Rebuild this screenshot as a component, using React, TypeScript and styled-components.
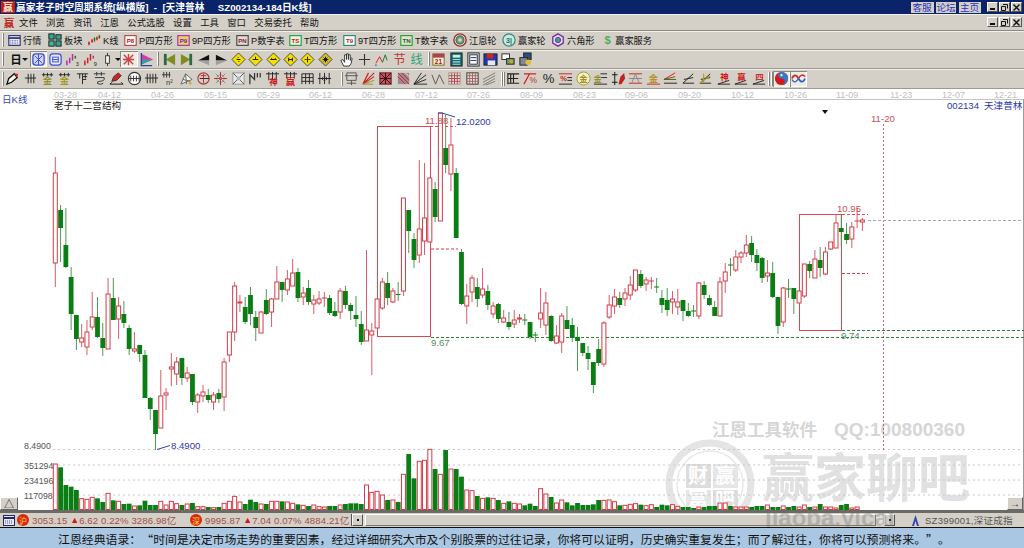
import React from 'react';
import styled, { createGlobalStyle } from 'styled-components';

const CJK = '"Liberation Sans", "Noto Sans CJK SC", sans-serif';
const GlobalStyle = createGlobalStyle`
  *, *::before, *::after { box-sizing: border-box; }
  html, body { margin: 0; padding: 0; overflow: hidden; background: #d4d0c8; }
  body { font-family: ${CJK}; }
`;
const Page = styled.div`width:1024px;height:548px;display:flex;flex-direction:column;background:#d4d0c8;overflow:hidden;`;
const TitleBar = styled.div`height:14px;flex:none;background:#0a246a;display:flex;align-items:center;color:#fff;font-size:9.7px;font-weight:700;white-space:pre;padding-left:1px;`;
const TitleText = styled.span`margin-left:1px;flex:1;`;
const LinkButton = styled.span`width:${p => p.$w}px;height:11px;margin-right:2.5px;background:#d4d0c8;color:#2a30c0;font-size:9.6px;font-weight:400;display:flex;align-items:center;justify-content:center;`;
const WinButtons = styled.div`display:flex;gap:1px;margin:0 2px 0 4px;`;
const WinButton = styled.span`width:11px;height:10px;background:#d4d0c8;border:1px solid;border-color:#fff #555 #555 #fff;display:flex;align-items:center;justify-content:center;`;
const MenuBar = styled.div`height:17px;flex:none;display:flex;align-items:center;border-bottom:1px solid #8b8982;box-shadow:inset 0 1px 0 #f2f0ea;font-size:9.4px;color:#111;padding-left:3px;`;
const MenuItem = styled.span`margin-right:8.3px;`;
const MenuSpace = styled.div`flex:1;`;
const ToolRow = styled.div`height:${p => p.$h}px;flex:none;display:flex;align-items:center;border-bottom:1px solid #9c9a92;box-shadow:inset 0 1px 0 #f2f0ea;font-size:9.2px;color:#111;`;
const Grip = styled.span`width:2px;height:14px;margin:0 ${p => p.$r ?? 0}px 0 ${p => p.$l ?? 2}px;border-left:1px solid #fff;border-right:1px solid #807e76;flex:none;`;
const LabelButton = styled.span`width:${p => p.$w}px;display:flex;align-items:center;gap:2px;flex:none;white-space:nowrap;`;
const IconButton = styled.span`width:${p => p.$w ?? 17.35}px;margin-left:${p => p.$ml ?? 0}px;height:16px;flex:none;display:flex;align-items:center;justify-content:center;${p => p.$on ? 'background:#eeece6;box-shadow:inset 1px 1px 0 #8b8982, inset -1px -1px 0 #fff;' : ''}`;
const DayPick = styled.span`width:18px;margin-left:3px;font-size:11.5px;font-weight:700;text-align:center;flex:none;`;
const Caret = styled.span`width:6px;height:3px;flex:none;margin:0 ${p => p.$r}px 0 ${p => p.$l}px;border-left:3px solid transparent;border-right:3px solid transparent;border-top:3px solid #111;`;
const ChartWrap = styled.div`height:421px;flex:none;background:#fff;position:relative;overflow:hidden;`;
const ChartSvg = styled.svg`display:block;`;
const CornerButton = styled.span`position:absolute;bottom:0;${p => p.$right ? 'right:1px;width:16px;' : 'left:0;width:18px;'}height:13px;background:#d4d0c8;border:1px solid;border-color:#fff #666 #666 #fff;display:flex;align-items:center;justify-content:center;font-size:10px;color:#222;`;
const StatusBar = styled.div`height:18px;flex:none;border-top:3px solid #6c6a64;border-bottom:1px solid #111;display:flex;align-items:center;position:relative;overflow:hidden;font-size:9.6px;color:#a0504a;`;
const IndexText = styled.span`margin-left:${p => p.$ml}px;white-space:pre;flex:none;display:flex;align-items:center;width:${p => p.$w}px;letter-spacing:.01em;`;
const Up = styled.span`color:#d01818;font-size:9px;`;
const Coin = styled.span`width:12px;height:12px;margin-left:${p => p.$ml}px;border-radius:50%;background:#d62a10;color:#ffd84a;font-size:8px;flex:none;display:flex;align-items:center;justify-content:center;`;
const ScrollBar = styled.div`width:544px;margin-left:4px;height:12px;display:flex;flex:none;background:#e4e1da;border-left:1px solid #555;`;
const ScrollBtn = styled.span`width:11px;height:12px;background:#d4d0c8;border:1px solid;border-color:#fff #555 #555 #fff;display:flex;align-items:center;justify-content:center;flex:none;&::after{content:'';width:2px;height:2px;background:#111;}`;
const ScrollThumb = styled.span`flex:1;background:#d4d0c8;border:1px solid;border-color:#fff #777 #777 #fff;margin-left:2px;margin-right:8px;`;
const MarketTag = styled.span`margin-left:17px;color:#555;display:flex;align-items:center;gap:6px;white-space:nowrap;letter-spacing:.02em;`;
const FadedUrl = styled.span`position:absolute;left:765px;top:-9px;font-size:24px;font-weight:700;color:#7a7a7a;opacity:.38;white-space:nowrap;pointer-events:none;`;
const QuoteBar = styled.div`flex:1;background:#a9c7e3;display:flex;align-items:center;padding-left:58px;font-family:"Noto Sans CJK SC",sans-serif;font-size:11.9px;text-spacing-trim:space-all;color:#111;white-space:nowrap;`;

const K='#222',R='#d02020',O='#90902a',G='#0a7d14',B='#3040c0',T='#208878',M='#b030a0';
const s=(c:string,d:string,f='none',w=1)=><path key={c+d+f} d={d} stroke={c} fill={f} strokeWidth={w}/>;
const tx=(t:string,x:number,y:number,c:string,z=7,b=700)=><text key={t+x} x={x} y={y} fill={c} fontSize={z} fontWeight={b} fontFamily={CJK} textAnchor="middle">{t}</text>;
const Icon=({size=15,children}:{size?:number;children:React.ReactNode})=><svg width={size} height={size} viewBox="0 0 16 16">{children}</svg>;
const boxIcon=(t:string,b:string,bg:string,c:string)=><Icon size={13}><rect x="1" y="2" width="14" height="12" fill={bg} stroke={b} strokeWidth="1.4"/>{tx(t,8,11,c,7.5)}</Icon>;

const row1=[
 {w:40,l:'行情',i:<Icon size={13}><rect x="1" y="2" width="14" height="12" fill="#e8e8f4" stroke="#202870" strokeWidth="1.3"/><path d="M1 5H15" stroke="#202870" strokeWidth="2"/><path d="M3 8H13M3 10H13M3 12H13" stroke="#505898" strokeDasharray="1 1"/></Icon>},
 {w:40,l:'板块',i:<Icon size={14}><rect x="1" y="1" width="6" height="6" fill="#30a890" stroke="#111"/><rect x="9" y="2" width="6" height="5" fill="#30a890" stroke="#111"/><rect x="1" y="9" width="6" height="6" fill="#40b8a0" stroke="#111"/><rect x="9" y="9" width="6" height="6" fill="#30a890" stroke="#111"/></Icon>},
 {w:36,l:'K线',i:<Icon size={13}>{s(R,'M1 14V9M5 11V6')}{s(G,'M8 10V4')}{s(R,'M11 8V3M14 6V1')}<rect x="0.5" y="10" width="2" height="3" fill={R}/><rect x="4" y="7" width="2" height="3" fill={R}/><rect x="7" y="5" width="2" height="3" fill={G}/><rect x="10" y="4" width="2" height="3" fill={R}/><rect x="13" y="2" width="2" height="3" fill={G}/></Icon>},
 {w:53,l:'P四方形',i:boxIcon('P8','#c04040','#fff','#a02020')},
 {w:59,l:'9P四方形',i:boxIcon('P9',M,'#e8d070','#7020a0')},
 {w:53,l:'P数字表',i:boxIcon('PN','#444','#ddd','#a01818')},
 {w:54,l:'T四方形',i:boxIcon('TS','#20a040','#f0f0e0','#c02020')},
 {w:57,l:'9T四方形',i:boxIcon('T9',T,'#fff','#c02020')},
 {w:53,l:'T数字表',i:boxIcon('TN','#20a040','#e8e4c0','#106060')},
 {w:49,l:'江恩轮',i:<Icon size={14}><circle cx="8" cy="8" r="7" fill="#fff" stroke="#a02828" strokeWidth="1.6"/><circle cx="8" cy="8" r="4.6" fill="#889080" stroke="#208040" strokeWidth="1.4"/><circle cx="8" cy="8" r="2" fill="#d8d8c8"/></Icon>},
 {w:49,l:'赢家轮',i:<Icon size={14}><circle cx="8" cy="8" r="7" fill="#c8e8e0" stroke="#308878" strokeWidth="1.4"/>{tx('3|',8,11,'#207060',8)}</Icon>},
 {w:51,l:'六角形',i:<Icon size={14}><path d="M8 1L14 4.5V11.5L8 15L2 11.5V4.5Z" fill="#e8d8f0" stroke="#7030a8" strokeWidth="1.5"/><circle cx="8" cy="8" r="3" fill="#509880" stroke="#4040c0"/></Icon>},
 {w:50,l:'赢家服务',i:<Icon size={14}>{tx('$',8,13.5,'#50b050',16)}</Icon>},
];

const dia=(d:string)=><Icon size={15}><path d="M8 1L15 8L8 15L1 8Z" fill="#f4e000" stroke="#444"/>{s('#111',d)}</Icon>;
const row2a=[
 {on:true,i:<Icon><rect x="2" y="2" width="12" height="12" rx="3" fill="#d0d8f8" stroke="#4050c8" strokeWidth="1.4"/>{s('#4050c8','M4 4L12 12M12 4L4 12M8 2V14')}</Icon>},
 {i:<Icon><rect x="2" y="2" width="12" height="12" rx="3" fill="#e4e8fc" stroke="#4050c8" strokeWidth="1.3"/>{s('#4050c8','M5 5.5H11M5 8H11M5 10.5H11M5 5V11M11 5V11')}</Icon>},
 {i:<Icon>{s(M,'M2 14V9M5 12V6M8 9V2','none',1.6)}{s(G,'M11 7V4','none',1.6)}{tx('3',13,15,K,6,400)}</Icon>},
 {i:<Icon>{s(R,'M2 14V9M5 12V6M8 9V2','none',1.6)}{s(M,'M11 7V4','none',1.6)}{tx('9',13,15,K,6,400)}</Icon>},
 {i:<Icon><rect x="6" y="4" width="4" height="8" fill="#f8f8e8" stroke="#333"/>{s('#333','M8 1V4M8 12V15')}</Icon>},
];
const row2b=[
 {on:true,i:<Icon><rect x="3" y="3" width="10" height="10" fill="#f4d8d8"/>{s('#c04848','M3 3L13 13M13 3L3 13M8 2V14M2 8H14','none',1.4)}</Icon>},
 {i:<Icon><path d="M3 2L15 8L3 13Z" fill="#e830b0"/><path d="M3 8L15 8L3 13Z" fill="#20a898"/>{s('#3040a0','M2.5 1V15M2 14.5H14','none',1.4)}</Icon>},
];
const row2c=[
 {i:<Icon><path d="M14 2L4 8L14 14Z" fill="#808c20"/><rect x="2" y="2" width="3" height="12" fill="#2a6a40"/></Icon>},
 {i:<Icon><path d="M2 2L12 8L2 14Z" fill="#808c20"/><rect x="11" y="2" width="3" height="12" fill="#2a6a40"/></Icon>},
 {i:<Icon><path d="M14 3L2 9L14 9Z" fill="#111"/><path d="M14 9L2 9L14 14Z" fill="#a0a0a0"/></Icon>},
 {i:<Icon><path d="M2 3L14 9L2 9Z" fill="#111"/><path d="M2 9L14 9L2 14Z" fill="#a0a0a0"/></Icon>},
 {i:dia('M6 8H10M7 6.5L8 5.5M8 10.5L9 9.5')},
 {i:dia('M5 8H11M8 5V8')},
 {i:dia('M5 8H11M5 8L6.5 6.5M11 8L9.5 6.5')},
 {i:dia('M6 6V10M10 6V10M6 8H10')},
 {i:dia('M8 5V11M5 8H7M9 8H11')},
 {i:<Icon size={15}><path d="M8 1L15 8L8 15L1 8Z" fill="#d8c020" stroke="#444"/>{s('#111','M5 8H11M8 5V11M6 6L10 10M10 6L6 10')}</Icon>},
];
const row2d=[
 {ml:3.5,i:<Icon>{s('#333','M5 15L2 9L4 8L6 11V3L8 3V8L8 2L10 2V8L10 3L12 3V9L13 6L14 7L13 12L11 15Z','#fff')}</Icon>},
 {ml:1,i:<Icon>{s('#333','M8 2V14M2 8H14','none',1.2)}</Icon>},
 {i:<Icon>{s(R,'M2 12L6 5L9 11')}{s(G,'M9 11L12 3L14 9')}{s(B,'M1 14H3')}</Icon>},
 {i:<Icon>{tx('节',8,13,'#c83030',13,400)}</Icon>},
 {i:<Icon>{tx('线',8,13,'#30a080',13,400)}</Icon>},
];
const row2e=[
 {i:<Icon><rect x="2" y="2" width="12" height="12" fill="#f8f0d0" stroke="#806020"/><rect x="2" y="2" width="12" height="4" fill="#b04050"/>{tx('21',8,13,'#a01818',7)}</Icon>},
 {i:<Icon><rect x="2" y="1" width="12" height="14" fill="#106878" stroke="#222"/><rect x="4" y="3" width="8" height="3" fill="#c8f0e0"/>{s('#b8d8c8','M4 8H12M4 10.5H12M4 13H12','none',1.2)}</Icon>},
 {i:<Icon><rect x="2" y="1" width="12" height="14" fill="#e8e8e8" stroke="#222"/><rect x="4" y="3" width="8" height="10" fill="#fff" stroke="#202848"/>{s('#202848','M5 6H11M5 9H11')}</Icon>},
 {i:<Icon><rect x="1" y="2" width="14" height="12" fill="#1838c0" stroke="#222"/><rect x="4" y="2" width="7" height="5" fill="#d02818"/><rect x="5" y="9" width="8" height="5" fill="#e8e8e8"/></Icon>},
 {i:<Icon><rect x="1" y="2" width="8" height="6" fill="#fff" stroke="#223"/><rect x="6" y="7" width="8" height="6" fill="#68a060" stroke="#223"/><circle cx="11" cy="10" r="2" fill="#d8a020"/></Icon>},
 {i:<Icon><rect x="6" y="1" width="8" height="7" fill="#305070" stroke="#223"/><rect x="2" y="6" width="8" height="8" fill="#808890" stroke="#223"/><circle cx="11" cy="11" r="3" fill="#e0c030"/></Icon>},
];

const tri='M2 7.5H14M5.5 3V13M8.5 3V13M11.5 3V13';
const ang='M2 13H14M2 13L13 3M3 9L13 7';
const gold=(c:string)=>tx('金',8,13.5,c,10,700);
const row3a=[
 <Icon><path d="M2 14L4 8L10 3L13 7L7 12Z" fill="#f4f4f0" stroke="#111" strokeWidth="1.4"/><path d="M10 3L13 7L14 3Z" fill="#d02020"/></Icon>,
 <Icon>{s(K,tri)}</Icon>,
 <Icon>{s(K,'M2 4H14M4 2V6M8 2V6M12 2V6')}{gold(O)}</Icon>,
 <Icon>{s(K,'M2 4H14M4 2V6M8 2V6M12 2V6')}{gold('#a09828')}</Icon>,
 <Icon>{s(K,'M2 3H14M5 3V8M8 3V14M11 3V8M8 6H13M8 9H12')}</Icon>,
 <Icon>{s('#333','M2 3H14M5 1V5M10 1V5M3 7H13Q14 11 8 11Q5 11 6 13.5Q10 15 12 13')}</Icon>,
 <Icon><path d="M3 11L5 6L10 2L13 5L8 10Z" fill="#d02020" stroke="#333"/>{s('#111','M1 14H15M1 14L3 12M15 14L13 12')}</Icon>,
 <Icon><circle cx="8" cy="8" r="6.5" fill="#fff" stroke="#333" strokeWidth="1.2"/>{s('#333','M1 8H15M4 5V11M7 5V11M10 5V11M13 5V11')}</Icon>,
 <Icon>{s(K,'M1 7.5H15M3.5 3V13M6.5 3V13M9.5 3V13M12.5 3V13')}</Icon>,
 <Icon>{s('#333','M1 4H10M3 1V7M6 1V7M9 1V7')}{tx('n²',9,15,'#333',8,400)}</Icon>,
 <Icon>{s('#666','M2 14L7 3L14 9ZM7 3L8 14M4 9L12 11','#f4f2ee')}<circle cx="12" cy="13" r="1.5" fill="#d0b020"/></Icon>,
 <Icon><circle cx="8" cy="8" r="6" fill="none" stroke="#a04040" strokeWidth="1.2"/>{s(K,'M4 8H14')}{s(R,'M8 3V13M5 5H11')}</Icon>,
 <Icon><circle cx="8" cy="8" r="4" fill="#e8e0e0" stroke="#999"/>{s(R,'M1 8H15M8 1V15')}{s('#888','M3 3L13 13M13 3L3 13')}</Icon>,
 <Icon><rect x="2" y="2" width="12" height="12" fill="#e8e8e8" stroke="#999"/>{s('#555','M2 2L14 14M14 2L2 14')}<rect x="6" y="6" width="4" height="4" fill="#b0b8b8"/></Icon>,
 <Icon>{s('#333','M2 14V4L7 9V2M10 2V7M13 2V7','none',1.3)}</Icon>,
 <Icon>{s(K,'M1 3H15M4 1V10M8 1V10M12 1V10')}{tx('神',9,15,'#d01818',9,700)}</Icon>,
 <Icon>{s(K,'M1 3H15M4 1V8M8 1V8M12 1V8')}{tx('赢',8,15,'#d01818',10,700)}</Icon>,
 <Icon>{s(K,'M2 3H14M2 3V14M14 3V14M2 7H14M2 11H14M6 3V14M10 3V14')}</Icon>,
 <Icon>{s(K,'M3 2V14M13 2V14M8 2V14M1 8H15M5 8L7 6M5 8L7 10M11 8L9 6M11 8L9 10')}</Icon>,
];
const gridI=(a:string,b:string)=><Icon><rect x="2" y="2" width="12" height="12" fill="#e8e0dc" stroke={a}/>{s(b,'M2 5H14M2 8H14M2 11H14M5 2V14M8 2V14M11 2V14')}</Icon>;
const row3b=[
 <Icon>{s('#555','M1 5H15M3 2H13V10H3ZM8 10V15M3 13H13')}</Icon>,
 <Icon>{s(R,'M2 14L14 2M2 14L14 6M2 14L8 2','none',1.2)}{s(O,'M2 14L14 10M2 14H13')}</Icon>,
 <Icon><rect x="2" y="2" width="12" height="12" fill="#c85060" stroke="#501818"/>{s('#301010','M2 2L14 14M14 2L2 14M8 2V14M2 8H14')}</Icon>,
 <Icon><rect x="2" y="2" width="12" height="12" fill="#a08890"/>{s('#d02020','M2 2L14 14M6 2L14 10M2 6L10 14')}{s('#eee','M10 2L14 6')}</Icon>,
 <Icon>{s('#222','M1 14H15M1 14L14 4M1 14L14 9M1 14L9 2')}</Icon>,
 <Icon>{s('#555','M2 4L6 14L10 4M10 4L15 14')}</Icon>,
 gridI('#a09090','#b04848'),
 gridI('#333','#a06060'),
 <Icon>{s('#777','M1 9L14 2M1 12L14 5M1 15L14 8M4 15L14 11')}</Icon>,
];
const row3c=[
 <Icon>{s(K,'M2 3H14M2 8H13M2 13H14M2 2V14M8 3V13M5 3V13','none',1.2)}</Icon>,
 <Icon>{s(R,'M1 3H14M1 14L7 3','none',1.3)}{tx('%',11,13,'#c03030',9,400)}</Icon>,
 <Icon>{tx('%',8,13,'#222',14,400)}</Icon>,
 <Icon>{s(R,'M1 3H15')}{tx('%',6,11,R,8,700)}{s('#222','M10 7H15M10 10H15M1 14H15')}</Icon>,
 <Icon><circle cx="8" cy="8" r="7" fill="#f4f0c8" stroke="#a09830"/>{tx('金',8,12,'#a09020',9,700)}</Icon>,
 <Icon>{s(K,'M8 3H15M8 7H15M1 14H15')}{tx('金',5,12,O,9,700)}</Icon>,
 <Icon>{s('#111','M4 1V15M1 4H7M1 12H7')}<path d="M8 14L10 6L14 2L15 8L11 14Z" fill="#c82020"/></Icon>,
 <Icon>{s(R,'M1 3H15M1 13H15')}{s('#888','M1 8H15M4 13L8 3L12 13')}</Icon>,
 <Icon>{s(R,'M1 14H15')}{tx('金',8,12,'#b89020',10,700)}</Icon>,
 <Icon>{s(R,'M1 9L13 2M1 9L13 6')}{s(G,'M1 9H14')}{s(K,'M1 13H15')}</Icon>,
 <Icon>{s(K,ang)}</Icon>,
 <Icon>{s(K,ang)}{s('#b0a020','M2 13L13 5M6 3V12','none',1.3)}</Icon>,
 <Icon>{s(K,'M2 14H15M2 14L14 10')}{tx('神',9,10,'#d01818',9,700)}</Icon>,
 <Icon>{s(K,'M2 14H15M2 14L14 10')}{tx('赢',9,10,'#d01818',9,700)}</Icon>,
 <Icon>{s(K,'M2 14H15M2 14L14 10')}{tx('四',9,10,'#c83030',9,700)}</Icon>,
];

// [wickTop, wickBottom, bodyTop, bodyBottom, rising]
const C:number[][]=[
[157,287,173,263,1],[205,262,210,228,0],[208,268,245,267,0],[267,330,277,314,0],[315,350,315,339,0],[324,347,338,342,1],[320,355,332,347,1],[292,330,317,327,1],[297,338,317,337,0],[323,356,338,348,0],[278,349,294,349,1],[278,320,298,320,0],[297,339,306,319,1],[301,328,314,323,0],[325,355,328,349,0],[332,353,349,351,1],[345,362,345,354,0],[350,398,355,398,0],[397,420,398,409,0],[410,450,410,434,0],[370,428,396,428,1],[388,410,393,395,1],[353,386,367,369,1],[357,385,362,374,1],[358,385,358,378,0],[367,382,373,378,1],[374,405,374,402,0],[393,413,395,402,1],[385,402,392,396,1],[389,403,395,400,0],[392,410,395,402,1],[389,403,393,399,0],[358,411,362,397,1],[332,362,332,355,1],[282,341,286,332,1],[295,312,302,303,1],[297,324,307,322,0],[287,325,295,314,0],[311,341,317,328,0],[311,333,312,333,1],[289,315,300,314,0],[298,327,299,312,1],[266,299,282,299,1],
[282,302,282,290,0],[270,295,279,290,1],[259,286,273,286,1],[268,302,272,298,0],[287,305,293,297,1],[280,305,288,302,0],[295,314,300,304,1],[291,305,299,303,1],[292,307,298,298,1],[295,315,298,313,0],[302,317,311,316,0],[288,319,291,312,1],[286,309,291,305,0],[303,320,305,311,0],[296,327,315,319,0],[311,345,324,342,0],[250,341,330,341,1],[323,375,331,335,1],[298,328,299,328,1],[278,310,282,308,1],[272,305,283,298,0],[288,303,291,302,1],[282,301,294,295,0],[198,296,198,291,1],[210,253,210,231,0],[233,268,239,260,0],[160,263,229,255,1],[163,255,218,241,1],[178,242,178,242,1],[182,222,189,217,0],[113,221,113,221,1],[115,173,148,165,0],[118,191,145,174,1],[168,238,173,238,0],[249,305,252,304,0],[284,324,296,306,1],[275,302,278,292,1],[278,307,287,299,0],[268,298,289,295,1],[285,310,291,305,0],[302,318,306,314,1],[303,323,304,319,0],[310,323,318,322,1],[312,330,322,327,0],[310,328,320,324,1],[314,323,318,319,1],
[314,325,320,320,0],[322,339,322,337,0],[332,342,335,335,0],[288,328,313,319,1],[292,335,303,325,1],[315,342,316,341,0],[325,344,336,343,1],[313,353,316,342,1],[306,329,320,329,0],[318,342,325,338,0],[327,371,337,341,0],[343,356,343,353,0],[346,370,353,359,0],[362,393,362,385,0],[339,366,349,363,0],[321,367,323,364,1],[295,319,305,317,1],[289,314,297,306,1],[292,308,298,305,0],[288,306,293,299,1],[276,300,285,295,1],[270,292,270,290,1],[270,288,274,286,0],[277,291,280,284,1],[277,289,281,281,1],[278,293,287,287,0],[290,313,298,305,0],[288,316,300,310,0],[291,314,299,302,1],[289,315,302,307,1],[300,321,300,311,0],[303,317,311,316,0],[305,317,311,311,0],[282,319,283,316,1],[281,299,285,295,0],[295,306,298,305,0],[301,316,307,316,0],[277,316,282,316,1],[263,293,272,281,1],[258,276,265,265,0],[250,272,257,270,1],[251,263,253,257,1],[235,257,245,253,1],[236,262,243,255,0],[249,271,255,263,0],[257,283,258,278,0],[260,282,273,276,1],
[262,298,273,297,0],[297,334,297,326,0],[287,327,288,322,1],[279,298,289,289,0],[288,314,288,299,0],[291,303,291,303,1],[264,298,264,296,1],[261,278,264,271,0],[250,278,259,278,1],[247,277,260,268,0],[247,275,252,274,1],[242,250,242,249,1],[215,248,223,248,1],[215,247,228,232,0],[223,244,234,240,0],[222,248,227,239,1],[208,228,221,221,1],[218,231,220,222,1],
];
const VZ=[102,112,165,170,180,206,208,202,205,216,190,211,214,222,221,228,226,212,225,225,214,225,214,221,225,222,219,230,230,231,233,231,220,214,199,216,222,209,216,222,222,214,214,214,216,220,223,226,228,225,230,231,228,228,
225,222,220,220,222,165,187,184,195,210,210,216,133,72,145,94,91,58,117,133,60,117,117,140,180,182,198,205,202,205,210,220,214,220,222,226,221,228,176,192,201,219,210,217,226,219,225,225,223,210,211,210,215,226,226,223,221,224,227,224,231,224,226,224,229,
231,231,234,231,231,228,228,219,219,228,231,231,231,231,228,228,225,231,231,228,231,228,231,225,231,231,222,231,231,234,225,222,234,231];
const px=(i:number)=>55.3+5.275*i;
const RED='#d23c48',GRN='#0a7d14';

const dates=['03-28','04-12','04-26','05-15','05-29','06-12','06-28','07-12','07-26','08-09','08-23','09-06','09-20','10-12','10-26','11-09','11-23','12-07','12-21'];
const dateX=[54,98,151,204,257,309,362,415,467,520,573,625,678,731,784,836,890,942,994];
const F=CJK;
const ChartText=({x,y,c,z=9.6,children}:any)=><text x={x} y={y} fill={c} fontSize={z} fontFamily={F}>{children}</text>;
const Dash=({x1,x2,y,c,d='3 2'}:any)=><line x1={x1} x2={x2} y1={y} y2={y} stroke={c} strokeDasharray={d}/>;

const Watermark=()=>(
 <g fill="#e1e1e1" fontFamily={F} fontWeight={700}>
  <text x="712" y="436" fontSize="17.5" fill="#d6d6d6">江恩工具软件</text>
  <text x="834" y="436" fontSize="19" fill="#d6d6d6">QQ:100800360</text>
  <text x="762" y="497" fontSize="52">赢家聊吧</text>
  <circle cx="710" cy="484" r="41" fill="none" stroke="#e4e4e4" strokeWidth="7"/>
  <circle cx="710" cy="484" r="33" fill="none" stroke="#e8e8e8" strokeWidth="1.5"/>
  <rect x="686" y="464" width="25" height="24" fill="#ddd"/><rect x="713" y="464" width="25" height="24" fill="#e6e6e6"/>
  <rect x="686" y="490" width="25" height="20" fill="#e6e6e6"/><rect x="713" y="490" width="25" height="20" fill="#ddd"/>
  <text x="688" y="483" fontSize="20" fill="#fff">财</text><text x="715" y="483" fontSize="20" fill="#fff">赢</text>
  <text x="688" y="507" fontSize="20" fill="#fff">富</text><text x="715" y="507" fontSize="20" fill="#fff">吧</text>
 </g>
);

const KChart=()=>(
 <ChartSvg width={1024} height={421} viewBox="0 89 1024 421">
  <Watermark/>
  <line x1="53" x2="1024" y1="99.5" y2="99.5" stroke="#c4c4c4"/>
  <line x1="1023.5" x2="1023.5" y1="99" y2="510" stroke="#9a9a9a"/>
  {dates.map((d,i)=><ChartText key={d} x={dateX[i]} y={98} c="#c0c0c0" z={9}>{d}</ChartText>)}
  <ChartText x={2} y={103} c="#3048c0">日K线</ChartText>
  <ChartText x={54} y={109} c="#222">老子十二宫结构</ChartText>
  <ChartText x={947} y={109} c="#2838b0">002134</ChartText>
  <ChartText x={984} y={109} c="#2838b0">天津普林</ChartText>
  <path d="M822 110H828L825 114Z" fill="#111"/>
  <ChartText x={871} y={122} c="#c85060">11-20</ChartText>
  {[449.5,465,480,495].map(y=><Dash key={y} x1={53} x2={1020} y={y} c="#c8c8c8" d="2 3"/>)}
  <line x1="883.5" x2="883.5" y1="124" y2="450" stroke="#d06070" strokeDasharray="2 2"/>
  <Dash x1={431} x2={1024} y={337.5} c="#30803c"/>
  <Dash x1={842} x2={1024} y={330.5} c="#30803c"/>
  <Dash x1={868} x2={1024} y={220.5} c="#a8a8a8"/>
  <Dash x1={430} x2={456} y={126.5} c="#d05058"/>
  <Dash x1={431} x2={458} y={249} c="#d03c48"/>
  <Dash x1={842} x2={868} y={214.5} c="#d05058"/>
  <Dash x1={842} x2={868} y={273.5} c="#d03c48"/>
  <rect x="377.5" y="126.5" width="53" height="210" fill="none" stroke="#d84850"/>
  <rect x="799.5" y="214.5" width="42" height="116" fill="none" stroke="#d84850"/>
  {C.map((c,i)=>{const x=px(i);const [wt,wb,bt,bb,up]=c;const h=Math.max(bb-bt,0);return (
   <g key={i}>
    <line x1={x} x2={x} y1={wt} y2={wb} stroke={up?'#d85c68':'#4f9a55'}/>
    {up?(h<1?<line x1={x-2.5} x2={x+2.5} y1={bt} y2={bt} stroke={RED}/>:<rect x={x-2} y={bt} width={4} height={h} fill="#fff" stroke={RED}/>)
       :(h<1?<line x1={x-2.5} x2={x+2.5} y1={bt} y2={bt} stroke={GRN}/>:<rect x={x-2.4} y={bt} width={4.8} height={h} fill={GRN}/>)}
   </g>);})}
  {VZ.map((v,i)=>{const x=px(i);const t=430+v/3;const up=C[i][4];return up
    ?<rect key={i} x={x-2} y={t} width={4} height={509.5-t} fill="#fff" stroke={RED}/>
    :<rect key={i} x={x-2.4} y={t} width={4.8} height={510-t} fill={GRN}/>;})}
  <path d="M438 113H442L455 117" fill="none" stroke="#3040b0"/>
  <ChartText x={425} y={124} c="#c85058">11.88</ChartText>
  <ChartText x={456} y={125} c="#3038b0">12.0200</ChartText>
  <ChartText x={431} y={346} c="#558a60">9.67</ChartText>
  <ChartText x={837} y={212} c="#c85058">10.95</ChartText>
  <ChartText x={841} y={339} c="#558a60">9.74</ChartText>
  <path d="M157 449.5L170 445.5" stroke="#3040b0" fill="none"/>
  <ChartText x={171} y={448.5} c="#3038b0">8.4900</ChartText>
  {[['8.4900',448.5],['351294',468.5],['234196',483.5],['117098',498.5]].map(([t,y])=><ChartText key={t as string} x={24} y={y} c="#555" z={8.8}>{t}</ChartText>)}
 </ChartSvg>
);

const Minus=()=><svg width="7" height="6" viewBox="0 0 7 6"><path d="M1 5H6" stroke="#111" strokeWidth="2"/></svg>;
const Restore=()=><svg width="7" height="7" viewBox="0 0 7 7"><path d="M2 .5H6.5V4.5M.5 2.5H4.5V6.5H.5Z" fill="none" stroke="#111"/></svg>;
const Close=()=><svg width="7" height="7" viewBox="0 0 7 7"><path d="M.5 .5L6.5 6.5M6.5 .5L.5 6.5" stroke="#111" strokeWidth="1.4"/></svg>;
const WinSet=()=><WinButtons><WinButton><Minus/></WinButton><WinButton><Restore/></WinButton><WinButton><Close/></WinButton></WinButtons>;
const Logo=()=><svg width="14" height="12" viewBox="0 0 14 12"><rect width="14" height="12" fill="#c02018"/><text x="7" y="10" fontSize="10" fontWeight="700" fill="#f4e8d0" textAnchor="middle" fontFamily={F}>赢</text></svg>;

const menu=['文件','浏览','资讯','江恩','公式选股','设置','工具','窗口','交易委托','帮助'];

export default function App(){
 return <Page>
  <GlobalStyle/>
  <TitleBar>
   <Logo/>
   <TitleText>赢家老子时空周期系统[纵横版]  -  [天津普林     SZ002134-184日K线]</TitleText>
   <LinkButton $w={23}>客服</LinkButton><LinkButton $w={20}>论坛</LinkButton><LinkButton $w={22}>主页</LinkButton>
   <WinSet/>
  </TitleBar>
  <MenuBar>
   <svg width="12" height="13" viewBox="0 0 12 13" style={{marginRight:4,flex:'none'}}><text x="6" y="10.5" fontSize="10.5" fontWeight="700" fill="#c02018" textAnchor="middle" fontFamily={F}>赢</text></svg>
   {menu.map(m=><MenuItem key={m}>{m}</MenuItem>)}
   <MenuSpace/>
   <WinSet/>
  </MenuBar>
  <ToolRow $h={19}>
   <Grip $r={4}/>
   {row1.map(b=><LabelButton key={b.l} $w={b.w}>{b.i}<span>{b.l}</span></LabelButton>)}
  </ToolRow>
  <ToolRow $h={19}>
   <Grip/>
   <DayPick>日</DayPick><Caret $l={-3} $r={1.5}/>
   {row2a.map((b,i)=><IconButton key={i} $on={b.on}>{b.i}</IconButton>)}
   <Caret $l={-1} $r={-1}/>
   {row2b.map((b,i)=><IconButton key={i} $on={b.on}>{b.i}</IconButton>)}
   <Grip $l={2} $r={1.6}/>
   {row2c.map((b,i)=><IconButton key={i}>{b.i}</IconButton>)}
   {row2d.map((b,i)=><IconButton key={i} $ml={b.ml}>{b.i}</IconButton>)}
   <Grip $l={3} $r={0}/>
   {row2e.map((b,i)=><IconButton key={i}>{b.i}</IconButton>)}
  </ToolRow>
  <ToolRow $h={20}>
   <Grip/>
   {row3a.map((b,i)=><IconButton key={i}>{b}</IconButton>)}
   <Grip $l={7} $r={0}/>
   {row3b.map((b,i)=><IconButton key={i} $w={17.3}>{b}</IconButton>)}
   <Grip $l={2.5} $r={0}/>
   <Grip $l={0} $r={0}/>
   {row3c.map((b,i)=><IconButton key={i} $w={17.5}>{b}</IconButton>)}
   <Grip $l={0.5} $r={0}/>
   <Grip $l={1} $r={0.5}/>
   <IconButton $on $w={17}><Icon><circle cx="8" cy="8" r="7" fill="#d81818"/><path d="M8 1A7 7 0 0 1 8 15A3.5 3.5 0 0 0 8 8A3.5 3.5 0 0 1 8 1Z" fill="#3878c8"/><circle cx="8" cy="4.5" r="1.2" fill="#fff"/></Icon></IconButton>
   <IconButton $on $w={17}><Icon>{s('#d02020','M1 8C3 3 6 4 8 8','none',1.8)}{s('#3060c0','M8 8C10 12 13 13 15 8','none',1.8)}{s('#d02020','M8 8C10 4 13 3 15 6','none',1.4)}{s('#3060c0','M1 9C3 13 6 12 8 8','none',1.4)}</Icon></IconButton>
  </ToolRow>
  <ChartWrap>
   <KChart/>
   <CornerButton>△</CornerButton>
   <CornerButton $right>→</CornerButton>
  </ChartWrap>
  <StatusBar>
   <svg width="12" height="11" viewBox="0 0 12 11" style={{marginLeft:3,flex:'none'}}><rect x=".5" y=".5" width="11" height="10" fill="#e8e8f4" stroke="#202870"/><path d="M1 3H11" stroke="#202870" strokeWidth="2"/><path d="M2 6H10M2 8H10" stroke="#505898" strokeDasharray="1 1"/></svg>
   <Coin $ml={2}>沪</Coin>
   <IndexText $ml={3} $w={143}>3053.15 <Up>▲</Up>6.62 0.22% 3286.98亿</IndexText>
   <Coin $ml={15}>深</Coin>
   <IndexText $ml={3} $w={142}>9995.87 <Up>▲</Up>7.04 0.07% 4884.21亿</IndexText>
   <ScrollBar><ScrollBtn/><ScrollThumb/><ScrollBtn/></ScrollBar>
   <MarketTag><svg width="7" height="11" viewBox="0 0 7 11"><path d="M3.5 0L7 11H5L3.5 6L2 11H0Z" fill="#3048b0"/></svg>SZ399001,深证成指</MarketTag>
   <FadedUrl>jiaoba.yicai</FadedUrl>
  </StatusBar>
  <QuoteBar>江恩经典语录：“时间是决定市场走势的重要因素，经过详细研究大市及个别股票的过往记录，你将可以证明，历史确实重复发生；而了解过往，你将可以预测将来。”。</QuoteBar>
 </Page>;
}
